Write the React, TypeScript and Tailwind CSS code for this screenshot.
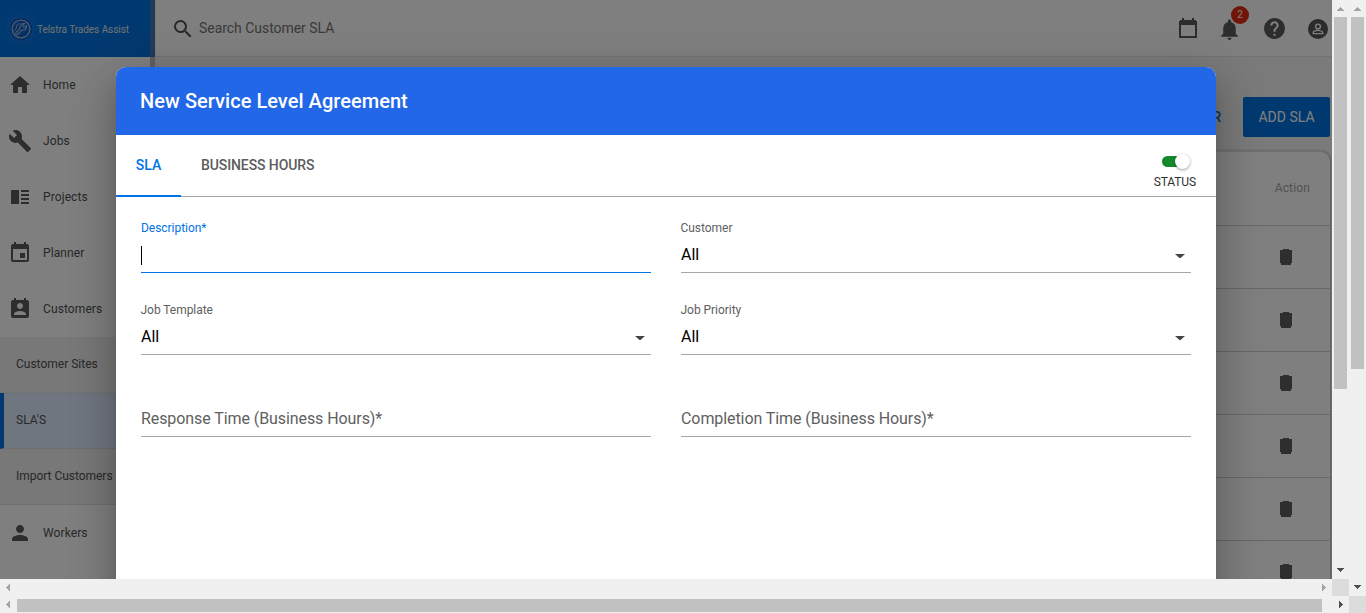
import React from "react";
import {
  MdHome, MdBuild, MdEvent, MdPermContactCalendar, MdPerson,
  MdSearch, MdNotifications, MdHelp,
} from "react-icons/md";

function Arrow({ dir, dark }: { dir: "up" | "down" | "left" | "right"; dark?: boolean }) {
  const points = {
    up: "5,11 12,11 8.5,7",
    down: "5,6 12,6 8.5,10",
    left: "10,5 10,12 6,8.5",
    right: "7,5 7,12 11,8.5",
  }[dir];
  return (
    <svg width="17" height="17" viewBox="0 0 17 17" className="block shrink-0" shapeRendering="crispEdges">
      <polygon points={points} fill={dark ? "#505050" : "#a3a3a3"} />
    </svg>
  );
}

function Logo() {
  return (
    <svg width="24" height="24" viewBox="0 0 24 24" fill="none" stroke="#9fb6d8" className="shrink-0 overflow-visible">
      <defs>
        <radialGradient id="halo">
          <stop offset="0.5" stopColor="#2a80e6" stopOpacity="0.6" />
          <stop offset="1" stopColor="#2a80e6" stopOpacity="0" />
        </radialGradient>
      </defs>
      <circle cx="12" cy="12" r="17" fill="url(#halo)" stroke="none" />
      <circle cx="12" cy="12" r="10.6" fill="#0a60cc" stroke="#0a5cc4" strokeWidth="1.2" />
      <circle cx="12" cy="12" r="8.9" strokeWidth="1.3" />
      <path d="M7 15.5 L11 11.3 C10.2 8.5 12.5 6 15.5 6.6 L13.4 8.8 L15.2 10.6 L17.5 8.5 C18 11.5 15.8 13.8 13 13 L8.8 17.2 C7 18 6 16.7 7 15.5 Z" strokeWidth="1.1" />
      <path d="M4 14.5 L7.5 11 C6.8 8.5 8.5 7 10.5 6.5" strokeWidth="1" />
    </svg>
  );
}

function ProjectsIcon() {
  return (
    <svg width="24" height="24" viewBox="0 0 24 24" fill="#5a5a5a" shapeRendering="crispEdges">
      <path d="M3 5H11V19H3ZM13 5H21V7H13ZM13 9H21V11H13ZM13 13H21V15H13ZM13 17H21V19H13Z" />
    </svg>
  );
}

function CalendarIcon() {
  return (
    <svg width="18" height="20" viewBox="0 0 18 20" fill="#5a5a5a" shapeRendering="crispEdges">
      <path fillRule="evenodd" d="M3 0H5V2H13V0H15V2H17V3H18V20H0V3H1V2H3ZM2 7V18H16V7Z" />
    </svg>
  );
}

const menu = [
  { label: "Home", icon: <MdHome size={24} color="#5a5a5a" /> },
  { label: "Jobs", icon: <MdBuild size={24} color="#5a5a5a" /> },
  { label: "Projects", icon: <ProjectsIcon /> },
  { label: "Planner", icon: <MdEvent size={24} color="#5a5a5a" /> },
  { label: "Customers", icon: <MdPermContactCalendar size={24} color="#5a5a5a" /> },
];

function MenuRow({ label, icon }: (typeof menu)[number]) {
  return (
    <div className="flex h-14 items-center pl-2">
      {icon}
      <span className="ml-[11px] text-[12px] tracking-[0.1px] text-[#505050]">{label}</span>
    </div>
  );
}

function Sidebar() {
  return (
    <aside className="flex w-[155px] shrink-0">
      <div className="w-[150px] shrink-0 bg-white">
        <div className="flex h-[57px] items-center bg-[#0072e0] pl-[9px]">
          <Logo />
          <span className="ml-1 mt-[2px] whitespace-nowrap text-[10px] tracking-[-0.05px] text-[#e4e4e4]">Telstra Trades Assist</span>
        </div>
        {menu.map((m) => <MenuRow key={m.label} {...m} />)}
        <div className="text-[12px] text-[#505050]">
          <div className="flex h-14 items-center border-b border-[#e4e4e4] bg-[#f0f0f0] pb-[2px] pl-4">Customer Sites</div>
          <div className="flex h-14 items-center border-b border-[#dcdcdc] border-l-4 border-l-[#0072e0] bg-[#e1edff] pb-[2px] pl-3">SLA'S</div>
          <div className="flex h-14 items-center whitespace-nowrap border-b border-[#e0e0e0] bg-[#f0f0f0] pb-[2px] pl-4 tracking-[-0.03px]">Import Customers</div>
        </div>
        <MenuRow label="Workers" icon={<MdPerson size={24} color="#5a5a5a" />} />
      </div>
      <div className="w-[5px] bg-[#c1c1c1]">
        <div className="h-[57px] bg-[#3f78b5]" />
      </div>
    </aside>
  );
}

function Trash() {
  return (
    <svg width="12" height="16" viewBox="0 0 12 16" fill="#5c5c5c" shapeRendering="crispEdges">
      <path d="M3 0H9V1H12V14H11V16H1V14H0V1H3Z" />
    </svg>
  );
}

function Account() {
  return (
    <svg width="20" height="20" viewBox="0 0 20 20">
      <circle cx="10" cy="10" r="10" fill="#565656" />
      <circle cx="10" cy="7.5" r="2.4" fill="none" stroke="#fff" strokeWidth="1.4" />
      <path d="M5.2 14.6V13.9C5.2 10.6 14.8 10.6 14.8 13.9V14.6Z" fill="none" stroke="#fff" strokeWidth="1.3" />
    </svg>
  );
}

function Main() {
  return (
    <main className="flex min-w-0 flex-1 flex-col border-l border-[#eeeeee] bg-[#f5f5f5]">
      <header className="flex h-[57px] shrink-0 items-center border-b border-[#e4e4e4] bg-white pl-[15px]">
        <MdSearch size={24} color="#505050" className="mt-[2px]" />
        <span className="ml-1 text-[14px] tracking-[-0.04px] text-[#757575]">Search Customer SLA</span>
        <div className="ml-auto flex items-center pr-[4px]">
          <CalendarIcon />
          <div className="relative ml-[20px]">
            <MdNotifications size={25} color="#5a5a5a" className="mt-[2px]" />
            <span className="absolute -top-[9px] left-[14px] flex size-[18px] items-center justify-center rounded-full bg-[#e02a10] text-[10px] text-white">2</span>
          </div>
          <MdHelp size={25} color="#5a5a5a" className="ml-5 mt-px" />
          <div className="ml-[21px] mt-[2px]"><Account /></div>
        </div>
      </header>
      <div className="flex h-[94px] shrink-0 items-center justify-end pb-[14px] pr-[2px] pt-[40px]">
        <span className="mr-[22px] text-[14px] font-medium text-[#0072e0]">FILTER</span>
        <div className="flex h-10 w-[87px] items-center justify-center rounded-[2px] bg-[#0072e0] text-[14px] text-white">ADD SLA</div>
      </div>
      <section className="mr-[2px] flex-1 rounded-tr-[10px] border-t border-[#e0e0e0] bg-white shadow-[1px_0_3px_rgba(0,0,0,0.3)]">
        <div className="flex h-[74px] items-center justify-end border-b border-[#d0d0d0] pb-[2px] pr-[20px] text-[12px] tracking-[0.15px] text-[#a4a4a4]">Action</div>
        {[0, 1, 2, 3, 4, 5].map((r) => (
          <div key={r} className="flex h-[63px] items-center justify-end border-b border-[#d0d0d0] pr-[38px]"><Trash /></div>
        ))}
      </section>
    </main>
  );
}

function Field({ label, value, active }: { label: string; value?: string; active?: boolean }) {
  return (
    <div className={`h-[56px] w-[510px] border-b ${active ? "border-[#0073e6]" : "border-[#a6a6a6]"}`}>
      {value || active ? (
        <>
          <div className={`h-[22px] pt-[2px] text-[12px] leading-[18px] tracking-[-0.04px] ${active ? "text-[#0073e6]" : "-ml-[0.5px] text-[#606060]"}`}>{label}</div>
          <div className="flex h-[32px] items-center justify-between">
            {active ? (
              <span className="h-[19px] w-px bg-black" />
            ) : (
              <>
                <span className="text-[16px] text-black">{value}</span>
                <svg width="10" height="4" viewBox="0 0 10 4" className="mr-[6px] mt-[2px]"><path d="M0 0H10L5 4.5Z" fill="#444" /></svg>
              </>
            )}
          </div>
        </>
      ) : (
        <div className="pt-[26px] text-[16px] leading-6 tracking-[-0.08px] text-[#606060]">{label}</div>
      )}
    </div>
  );
}

function Modal() {
  return (
    <div className="absolute left-[116px] top-[67px] flex h-[546px] w-[1100px] flex-col rounded-t-[10px] bg-white shadow-[0_11px_15px_-7px_rgba(0,0,0,0.2),0_24px_38px_3px_rgba(0,0,0,0.14),0_9px_46px_8px_rgba(0,0,0,0.12)]">
      <div className="flex h-[68px] items-center rounded-t-[10px] bg-[#2167e8] pl-6 text-[20px] font-medium tracking-[0.04px] text-white">New Service Level Agreement</div>
      <div className="flex h-[62px] border-b border-[#a6a6a6] text-[14px] font-medium">
        <div className="flex h-[62px] w-[65px] items-center justify-center border-b-2 border-[#0073e6] text-[#0073e6]">SLA</div>
        <div className="flex h-[61px] items-center pl-5 tracking-[-0.1px] text-[#5c5c5c]">BUSINESS HOURS</div>
        <div className="ml-auto mr-5 flex flex-col items-center pt-[19px]">
          <div className="ml-[2px] flex h-[15px] w-[28px] items-center">
            <span className="h-[11px] w-4 rounded-l-full bg-[#14892c]" />
            <span className="-ml-[3px] size-[15px] shrink-0 rounded-full bg-white shadow-[0_1px_3px_rgba(0,0,0,0.4)]" />
          </div>
          <span className="mt-[4px] text-[12px] font-normal leading-[18px] tracking-[-0.1px] text-[#303030]">STATUS</span>
        </div>
      </div>
      <div className="grid grid-cols-[510px_510px] gap-x-[30px] gap-y-[26px] pl-[25px] pt-5">
        <Field label="Description*" active />
        <Field label="Customer" value="All" />
        <Field label="Job Template" value="All" />
        <Field label="Job Priority" value="All" />
        <Field label="Response Time (Business Hours)*" />
        <Field label="Completion Time (Business Hours)*" />
      </div>
    </div>
  );
}

export default function App() {
  return (
    <div className="flex h-[613px] w-[1366px] overflow-hidden bg-[#f0f0f0] font-['Roboto',sans-serif]">
      <div className="flex w-[1332px] shrink-0 flex-col">
        <div className="relative flex h-[579px] shrink-0 overflow-hidden">
          <Sidebar />
          <Main />
          <div className="absolute inset-0 bg-black/50" />
          <Modal />
        </div>
        <div className="flex h-[17px] items-center justify-between">
          <Arrow dir="left" /><Arrow dir="right" />
        </div>
        <div className="flex h-[17px] items-center">
          <Arrow dir="left" />
          <div className="mt-[1px] h-[13px] w-[1305px] bg-[#c1c1c1]" />
        </div>
      </div>
      <div className="flex w-[17px] shrink-0 flex-col">
        <Arrow dir="up" />
        <div className="ml-[2px] h-[372px] w-[13px] bg-[#c1c1c1]" />
        <div className="mt-auto"><Arrow dir="down" dark /></div>
        <div className="h-[17px] bg-[#dcdcdc]" />
        <Arrow dir="right" dark />
      </div>
      <div className="flex w-[17px] shrink-0 flex-col">
        <Arrow dir="up" />
        <div className="ml-[2px] h-[352px] w-[13px] bg-[#c1c1c1]" />
        <div className="mt-auto"><Arrow dir="down" dark /></div>
        <div className="h-[17px] bg-[#dcdcdc]" />
      </div>
    </div>
  );
}
